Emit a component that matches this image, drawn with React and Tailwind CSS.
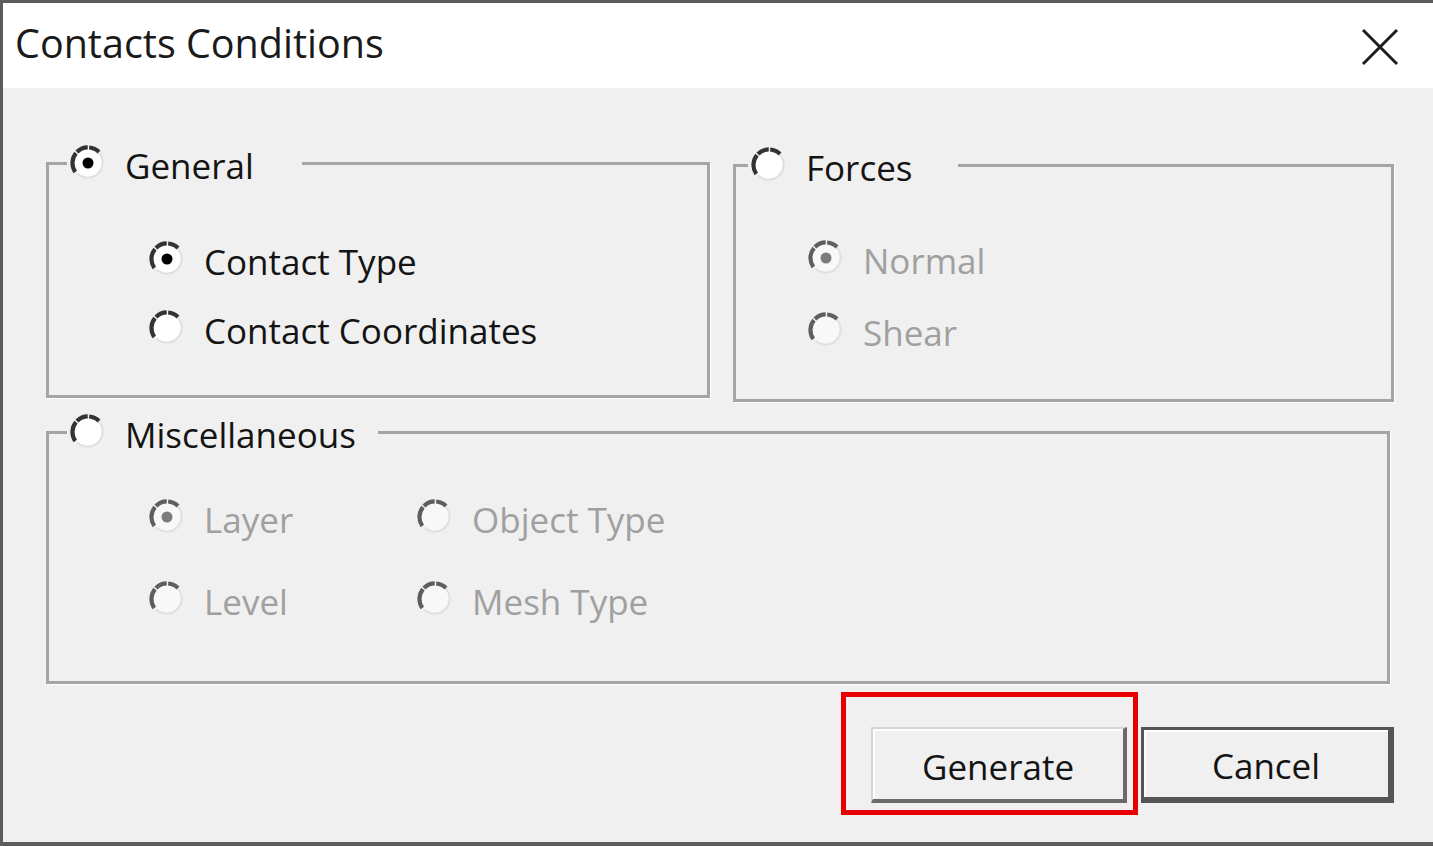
import React from "react";

function Radio({ checked, disabled }) {
  const arc = disabled ? "#5e5e5e" : "#333333";
  return (
    <svg width="36" height="36" viewBox="0 0 36 36" className="shrink-0">
      <circle cx="18" cy="18" r="14.5" fill={disabled ? "#f8f8f8" : "#ffffff"} />
      <path d="M 28.6 7.4 A 15 15 0 0 1 7.4 28.6" stroke="#e0e0e0" strokeWidth="2" fill="none" />
      <path
        d="M 29 7 A 15.5 15.5 0 0 0 7 29"
        stroke={arc}
        strokeWidth="4.2"
        fill="none"
        strokeDasharray="11 1.4 12 1.4 20"
      />
      {checked && <circle cx="18" cy="18" r="5.5" fill={disabled ? "#7c7c7c" : "#000000"} />}
    </svg>
  );
}

function Option({ label, checked, disabled }) {
  return (
    <div className="flex h-12 items-center gap-[19px]">
      <Radio checked={checked} disabled={disabled} />
      <span className={disabled ? "pt-1 text-[#a0a0a0]" : "pt-1 text-[#141414]"}>{label}</span>
    </div>
  );
}

function Legend({ label, checked, className }) {
  return (
    <legend className={className}>
      <div className="flex h-12 items-center gap-[19px]">
        <Radio checked={checked} />
        <span className="pt-1 text-[#141414]">{label}</span>
      </div>
    </legend>
  );
}

export default function App() {
  return (
    <div className="flex h-[846px] w-[1433px] flex-col overflow-hidden border-t-[3px] border-b-[4px] border-l-[3px] border-[#5c5c5c] bg-white font-['Open_Sans','Noto_Sans',sans-serif] text-[35px] leading-none">
      {/* Title bar */}
      <div className="flex h-[85px] shrink-0 items-center justify-between bg-white pl-[12px] pr-[34px]">
        <span className="pb-[3px] text-[39.5px] text-[#1a1a1a]">Contacts Conditions</span>
        <svg width="38" height="38" viewBox="0 0 38 38" className="mt-[2px]">
          <line x1="2" y1="2" x2="36" y2="36" stroke="#1e1e1e" strokeWidth="3" />
          <line x1="36" y1="2" x2="2" y2="36" stroke="#1e1e1e" strokeWidth="3" />
        </svg>
      </div>

      {/* Body */}
      <div className="flex flex-1 flex-col bg-[#f0f0f0] pt-[51px] pl-[43px] pr-[39px]">
        <div className="flex items-start gap-[23px]">
          <fieldset className="h-[259px] w-[664px] shrink-0 border-[3px] border-[#a4a4a4] shadow-[1px_1px_0_#ffffff]">
            <Legend label="General" checked className="ml-[18px] pl-[3px] pr-[48px]" />
            <div className="flex flex-col gap-[21px] pt-[48px] pl-[100px]">
              <Option label="Contact Type" checked />
              <Option label="Contact Coordinates" />
            </div>
          </fieldset>
          <fieldset className="mt-[2px] h-[261px] w-[661px] shrink-0 border-[3px] border-[#a4a4a4] shadow-[1px_1px_0_#ffffff]">
            <Legend label="Forces" className="ml-[12px] pl-[3px] pr-[45px]" />
            <div className="flex flex-col gap-[24px] pt-[45px] pl-[72px]">
              <Option label="Normal" checked disabled />
              <Option label="Shear" disabled />
            </div>
          </fieldset>
        </div>

        <fieldset className="mt-[6px] h-[276px] w-[1344px] shrink-0 border-[3px] border-[#a4a4a4] shadow-[1px_1px_0_#ffffff]">
          <Legend label="Miscellaneous" className="ml-[18px] pl-[3px] pr-[22px]" />
          <div className="grid grid-cols-[268px_auto] gap-y-[34px] pt-[37px] pl-[100px]">
            <Option label="Layer" checked disabled />
            <Option label="Object Type" disabled />
            <Option label="Level" disabled />
            <Option label="Mesh Type" disabled />
          </div>
        </fieldset>

        <div className="mt-[43px] flex justify-end gap-[14px]">
          <div className="relative">
            <button className="flex h-[76px] w-[256px] items-center justify-center border-t-2 border-l-2 border-r-[4px] border-b-[4px] border-t-[#d6d6d6] border-l-[#d6d6d6] border-r-[#6a6a6a] border-b-[#6a6a6a] bg-[#f0f0f0] pt-1 text-[#141414] shadow-[inset_2px_2px_0_#ffffff]">
              Generate
            </button>
            <div className="pointer-events-none absolute -top-[35px] -left-[30px] -right-[11px] -bottom-[12px] border-[5px] border-[#e60000]" />
          </div>
          <button className="flex h-[76px] w-[253px] items-center justify-center border-t-[3px] border-l-[3px] border-r-[6px] border-b-[6px] border-[#555555] bg-[#f0f0f0] pt-1 text-[#141414] shadow-[inset_2px_2px_0_#ffffff]">
            Cancel
          </button>
        </div>
      </div>
    </div>
  );
}
